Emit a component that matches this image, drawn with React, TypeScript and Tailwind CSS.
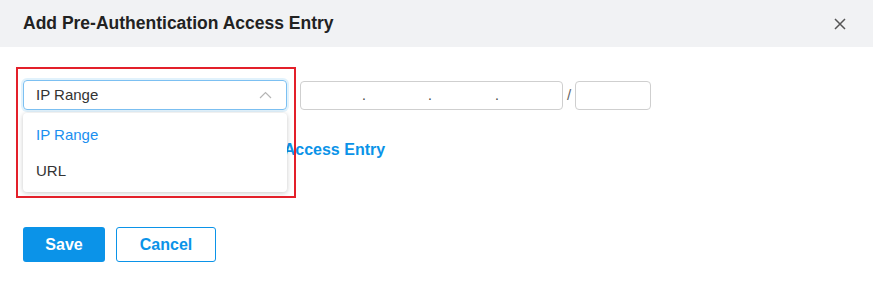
import React from "react";

export default function App() {
  return (
    <div className="w-[873px] h-[302px] bg-white relative overflow-hidden" style={{ fontFamily: '"Liberation Sans", Arial, sans-serif' }}>
      <div className="h-[47px] bg-[#f1f2f4] flex items-center justify-between pl-[23px] pr-[27px]">
        <div className="text-[17.5px] font-bold text-[#222]">Add Pre-Authentication Access Entry</div>
        <svg width="12" height="12" viewBox="0 0 12 12" className="text-[#555]">
          <path d="M1 1L11 11M11 1L1 11" stroke="currentColor" strokeWidth="1.5" />
        </svg>
      </div>
      <div className="pl-[23px] pt-[33px]">
        <div className="flex items-center">
          <div className="relative">
            <div className="w-[264px] h-[30px] rounded-[4px] border border-[#7cc0f2] shadow-[0_0_0_2px_rgba(11,147,232,0.12)] flex items-center justify-between pl-[12px] pr-[14px]">
              <span className="text-[15px] text-[#333]">IP Range</span>
              <svg width="13" height="8" viewBox="0 0 13 8">
                <path d="M1 7L6.5 1.5L12 7" stroke="#b5b5b5" strokeWidth="1.2" fill="none" />
              </svg>
            </div>
            <div className="absolute left-0 top-[33px] w-[264px] h-[79px] bg-white rounded-[4px] shadow-[0_1px_5px_rgba(0,0,0,0.22)] z-10 flex flex-col pt-[4px]">
              <div className="h-[36px] flex items-center pl-[13px] text-[15px] text-[#1a8ff0]">IP Range</div>
              <div className="h-[36px] flex items-center pl-[13px] text-[15px] text-[#333]">URL</div>
            </div>
            <div className="absolute left-[-7px] top-[-13px] w-[280px] h-[131px] border-2 border-[#e3202a] z-20 pointer-events-none" />
          </div>
          <div className="ml-[13px] w-[263px] h-[29px] rounded-[4px] border border-[#cfcfcf] flex items-center pl-[61px] text-[#444] text-[14px]">
            <span className="w-[66px]">.</span>
            <span className="w-[67px]">.</span>
            <span>.</span>
          </div>
          <span className="mx-[4px] text-[#666] text-[15px]">/</span>
          <div className="w-[76px] h-[29px] rounded-[4px] border border-[#cfcfcf]" />
        </div>
        <div className="mt-[29px] h-[22px] flex items-center text-[16px] font-bold text-[#0b93e8] pl-[65px]">
          + Add Pre-Authentication Access Entry
        </div>
        <div className="mt-[66px] flex gap-[11px]">
          <button className="w-[82px] h-[35px] rounded-[3px] bg-[#0b93e8] text-white font-bold text-[16px]">Save</button>
          <button className="w-[100px] h-[35px] rounded-[3px] border border-[#0b93e8] text-[#0b93e8] font-bold text-[16px] bg-white">Cancel</button>
        </div>
      </div>
    </div>
  );
}
